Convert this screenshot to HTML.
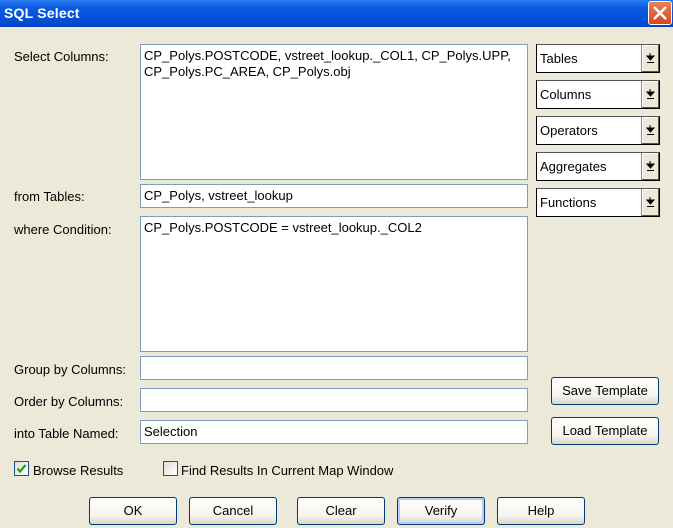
<!DOCTYPE html>
<html><head><style>
*{box-sizing:border-box;margin:0;padding:0}
body{width:673px;height:528px;overflow:hidden;background:#ece9d8;font-family:"Liberation Sans",sans-serif;font-size:13px;color:#000;position:relative}
.title{position:absolute;left:0;top:0;width:673px;height:27px;background:linear-gradient(#2a7af0,#0a5ae0 30%,#0550d8 70%,#0444c4);color:#fff;font-weight:bold;font-size:14px;padding:5px 0 0 4px;letter-spacing:.2px}
.close{position:absolute;left:648px;top:1px;width:24px;height:24px;border:1px solid #fff;border-radius:3px;background:linear-gradient(#e8805a,#d8451c);}
.lbl{position:absolute;left:14px}
.box{position:absolute;left:140px;width:388px;background:#fff;border:1px solid #7f9db9;padding:3px 3px;line-height:16px}
.dd{position:absolute;left:536px;width:124px;height:29px;background:#fff;border:1px solid #000;border-top-color:#555;padding:6px 0 0 3px;font-size:13px}
.dd i{position:absolute;right:0;top:0;width:18px;height:27px;background:#ece9d8;border-left:1px solid #888;box-shadow:inset -1px -1px #555,inset 1px 1px #fff}
.dd svg{position:absolute;left:4px;top:8px}
.btn{position:absolute;height:28px;border:1px solid #003c74;border-radius:3px;background:linear-gradient(#fff,#f4f3ee 70%,#d8d5c8);text-align:center;line-height:26px;font-size:13px}
.cb{position:absolute;top:461px;width:15px;height:15px;border:1px solid #1c5180;background:linear-gradient(135deg,#dcdcd7,#fff)}
</style></head><body>
<div class="title">SQL Select</div>
<div class="close"><svg width="22" height="22" viewBox="0 0 22 22"><path d="M5 5L17 17M17 5L5 17" stroke="#fff" stroke-width="2.6"/></svg></div>

<div class="lbl" style="top:49px">Select Columns:</div>
<div class="box" style="top:44px;height:136px">CP_Polys.POSTCODE, vstreet_lookup._COL1, CP_Polys.UPP,<br>CP_Polys.PC_AREA, CP_Polys.obj</div>
<div class="lbl" style="top:189px">from Tables:</div>
<div class="box" style="top:184px;height:24px">CP_Polys, vstreet_lookup</div>
<div class="lbl" style="top:222px">where Condition:</div>
<div class="box" style="top:216px;height:136px">CP_Polys.POSTCODE = vstreet_lookup._COL2</div>
<div class="lbl" style="top:362px">Group by Columns:</div>
<div class="box" style="top:356px;height:24px"></div>
<div class="lbl" style="top:394px">Order by Columns:</div>
<div class="box" style="top:388px;height:24px"></div>
<div class="lbl" style="top:426px">into Table Named:</div>
<div class="box" style="top:420px;height:24px">Selection</div>

<div class="dd" style="top:44px">Tables<i><svg width="9" height="10" viewBox="0 0 9 10"><path d="M4 0V4M1 3L4.5 7L8 3Z" stroke="#000" fill="#000"/><path d="M1 9.5H8" stroke="#000"/></svg></i></div>
<div class="dd" style="top:80px">Columns<i><svg width="9" height="10" viewBox="0 0 9 10"><path d="M4 0V4M1 3L4.5 7L8 3Z" stroke="#000" fill="#000"/><path d="M1 9.5H8" stroke="#000"/></svg></i></div>
<div class="dd" style="top:116px">Operators<i><svg width="9" height="10" viewBox="0 0 9 10"><path d="M4 0V4M1 3L4.5 7L8 3Z" stroke="#000" fill="#000"/><path d="M1 9.5H8" stroke="#000"/></svg></i></div>
<div class="dd" style="top:152px">Aggregates<i><svg width="9" height="10" viewBox="0 0 9 10"><path d="M4 0V4M1 3L4.5 7L8 3Z" stroke="#000" fill="#000"/><path d="M1 9.5H8" stroke="#000"/></svg></i></div>
<div class="dd" style="top:188px">Functions<i><svg width="9" height="10" viewBox="0 0 9 10"><path d="M4 0V4M1 3L4.5 7L8 3Z" stroke="#000" fill="#000"/><path d="M1 9.5H8" stroke="#000"/></svg></i></div>

<div class="btn" style="left:551px;top:377px;width:108px">Save Template</div>
<div class="btn" style="left:551px;top:417px;width:108px">Load Template</div>

<div class="cb" style="left:14px"><svg width="13" height="13" viewBox="0 0 13 13"><path d="M2.5 6.5L5 9.5L10.5 3" stroke="#21a121" stroke-width="2.2" fill="none"/></svg></div>
<div class="lbl" style="left:33px;top:463px">Browse Results</div>
<div class="cb" style="left:163px"></div>
<div class="lbl" style="left:181px;top:463px">Find Results In Current Map Window</div>

<div class="btn" style="left:89px;top:497px;width:88px">OK</div>
<div class="btn" style="left:189px;top:497px;width:88px">Cancel</div>
<div class="btn" style="left:297px;top:497px;width:88px">Clear</div>
<div class="btn" style="left:397px;top:497px;width:88px;box-shadow:inset 0 0 0 2px #b8cff5">Verify</div>
<div class="btn" style="left:497px;top:497px;width:88px">Help</div>
</body></html>
